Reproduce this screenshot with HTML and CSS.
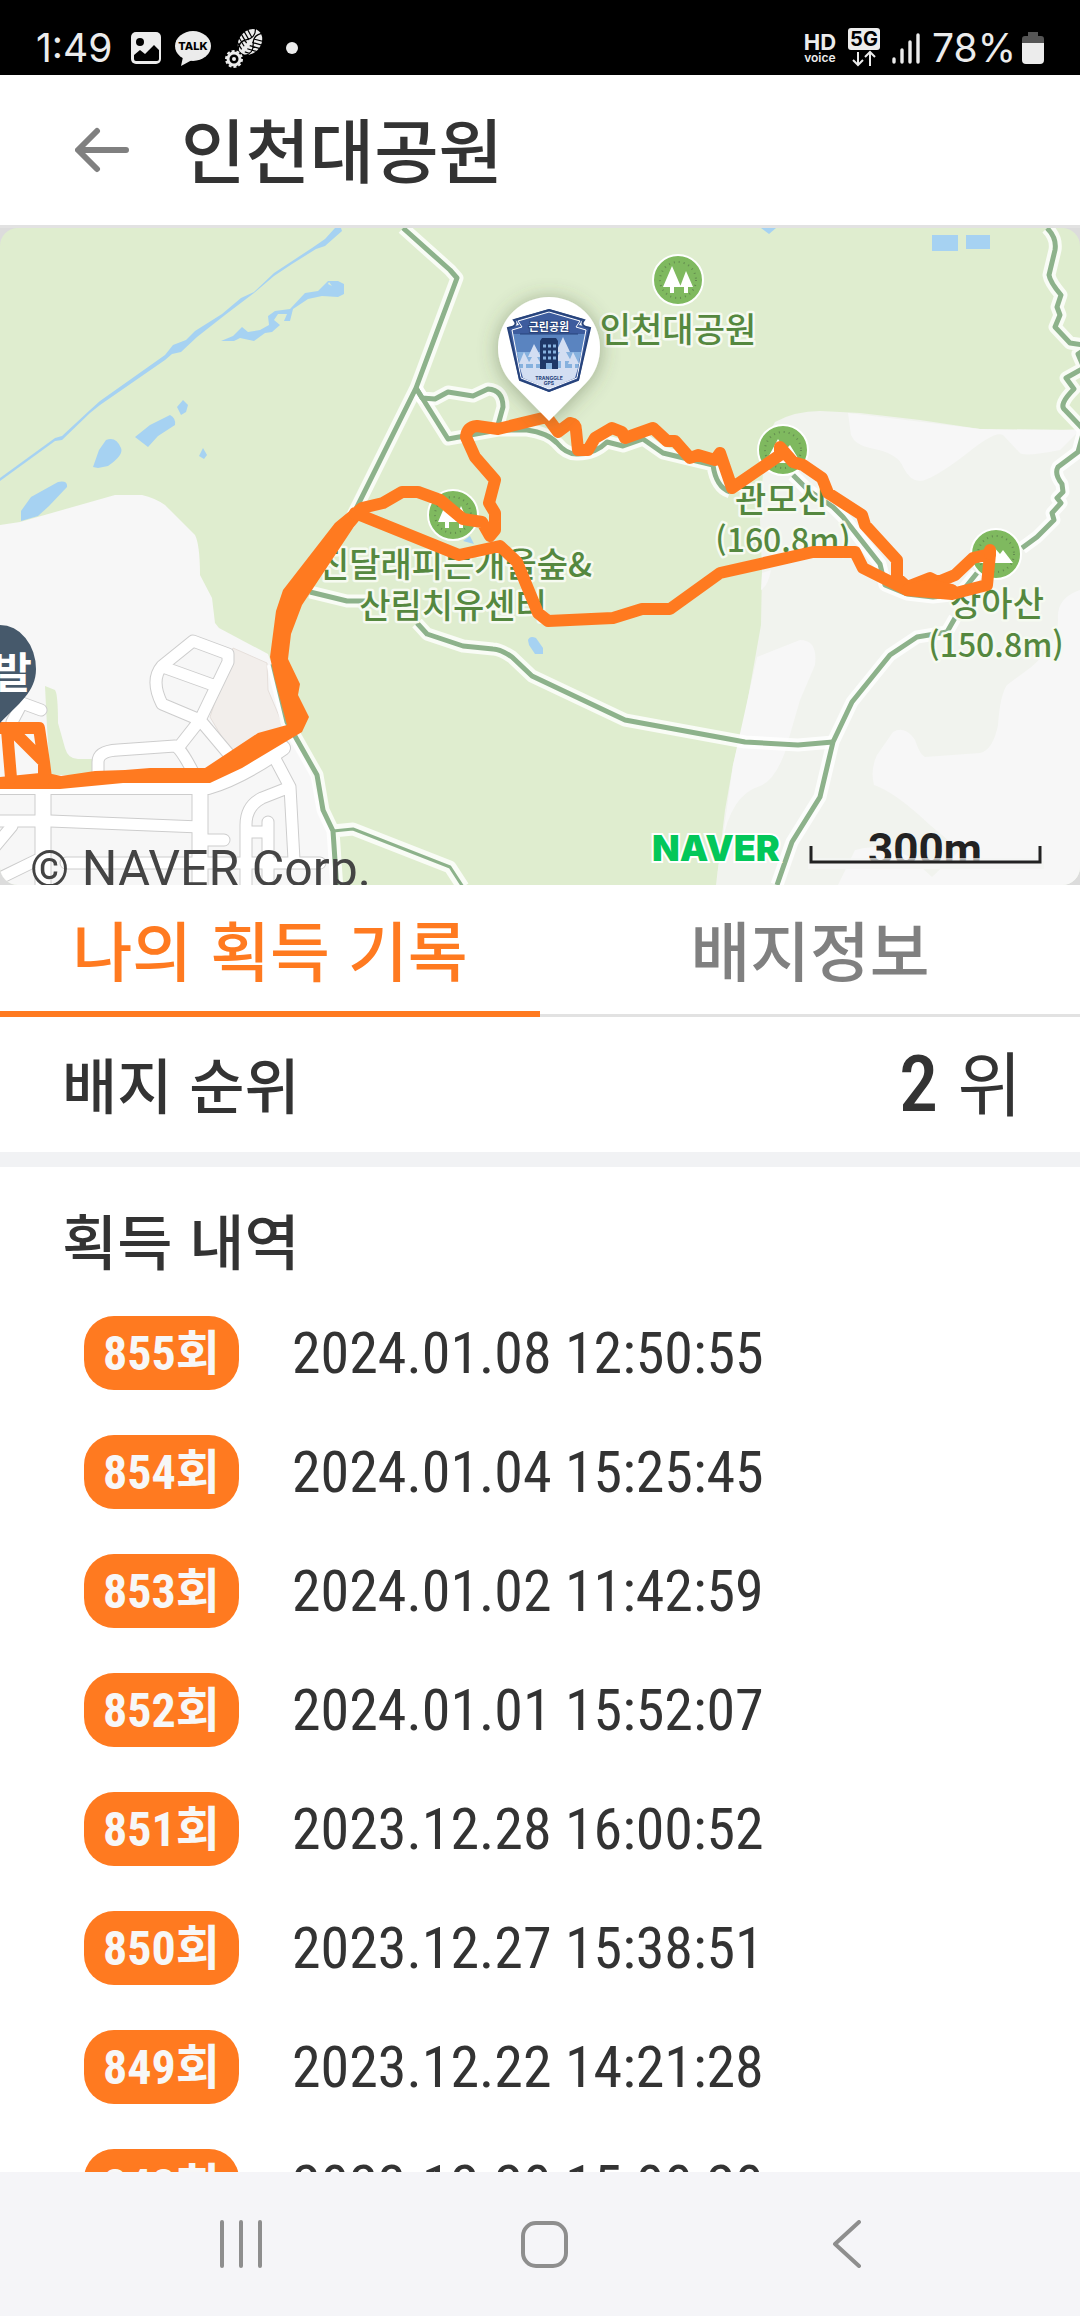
FILE: index.html
```html
<!DOCTYPE html>
<html lang="ko">

<head>
    <meta charset="UTF-8">
    <meta name="viewport" content="width=device-width, initial-scale=1.0">
    <title>인천대공원</title>
    <link rel="stylesheet" href="styles.css">
</head>

<body>

    <div class="app">
        <!-- 상태 표시줄 -->
        <div class="status">
            <div class="status-left">
                <span class="clock">1:49</span>
                <svg width="32" height="34" viewBox="0 0 32 34">
                    <rect x="1" y="1" width="30" height="32" rx="5" fill="#ececec" />
                    <circle cx="10" cy="11" r="4" fill="#000" />
                    <path d="M4 24l6-5 5 4 9-9 5 5v9q0 2-2 2H6q-2 0-2-2z" fill="#000" />
                </svg>
                <svg width="38" height="38" viewBox="0 0 38 38">
                    <ellipse cx="19" cy="17" rx="18" ry="15" fill="#ececec" />
                    <path d="M9 28L7 37l11-6z" fill="#ececec" />
                    <text class="talk" x="19" y="21" text-anchor="middle">TALK</text>
                </svg>
                <svg width="40" height="40" viewBox="0 0 40 40">
                    <g transform="rotate(38 26 14)">
                        <ellipse cx="26" cy="14" rx="11" ry="14" fill="#ececec" />
                        <path d="M15 5l9 4M14 9l10 4M14 13l10 4M14 17l10 4M16 22l8 3M37 5l-9 4M38 9l-10 4M38 13l-10 4M38 17l-10 4M36 22l-8 3M22 0q6 7 0 14t0 14M30 0q-6 7 0 14t0 14" stroke="#000" stroke-width="1.2" fill="none" />
                    </g>
                    <circle cx="10" cy="31" r="6" fill="none" stroke="#ececec" stroke-width="3" />
                    <circle cx="10" cy="31" r="8" fill="none" stroke="#ececec" stroke-width="2" stroke-dasharray="3 2" />
                    <circle cx="10" cy="31" r="2" fill="#ececec" />
                </svg>
                <i class="dot"></i>
            </div>
            <div class="status-right">
                <span class="hd"><b>HD</b><small>voice</small></span>
                <svg width="32" height="40" viewBox="0 0 32 40">
                    <rect width="32" height="22" rx="3" fill="#ececec" />
                    <text class="net" x="16" y="18" text-anchor="middle">5G</text>
                    <path d="M10 24v12M5 32l5 5 5-5M22 38V25M17 29l5-5 5 5" fill="none" stroke="#ececec" stroke-width="2" />
                </svg>
                <svg width="28" height="32" viewBox="0 0 28 32">
                    <path d="M2 27v3M10 18v12M18 10v20M26 3v27" stroke="#ececec" stroke-width="3.4" stroke-linecap="round" />
                </svg>
                <span class="percent">78%</span>
                <svg width="22" height="32" viewBox="0 0 22 32">
                    <path d="M6 0h10v4h3q3 0 3 3v5H0V7q0-3 3-3h3z" fill="#555" />
                    <path d="M0 11h22v17q0 4-4 4H4q-4 0-4-4z" fill="#ececec" />
                </svg>
            </div>
        </div>

        <header class="header">
            <a class="back" href="#" aria-label="뒤로">
                <svg width="54" height="46" viewBox="0 0 54 46">
                    <path d="M51 23H4M22 4L3 23l19 19" fill="none" stroke="#808080" stroke-width="6" stroke-linecap="round" stroke-linejoin="round" />
                </svg>
            </a>
            <h1>인천대공원</h1>
        </header>

        <!-- 지도 -->
        <div class="map">
            <svg class="map-svg" viewBox="0 228 1080 657">
                <defs>
                    <filter id="shadow" x="-50%" y="-50%" width="200%" height="200%">
                        <feDropShadow dx="0" dy="2" stdDeviation="10" flood-color="#4a5a3a" flood-opacity="0.45" />
                    </filter>
                </defs>
                <rect y="228" width="1080" height="657" fill="#dfedcf" />

                <!-- 평지 -->
                <path fill="#f7f7f7" d="M0 525L20 522 115 495H142Q155 498 165 505L195 535Q200 545 200 575L212 598 215 623 219 628 268 654 276 675 288 720 310 770 320 805 335 835V885H0z" />
                <path fill="#dfedcf" d="M45 686L55 690Q58 694 58 723L65 748Q68 759 78 759H93V775H50L47 727z" />
                <path fill="#f2eeeb" stroke="#e6dfdb" stroke-width="1" d="M233 648L267 663 268 690 285 730 232 754 210 717z" />
                <path fill="#f1f3ee" d="M775 422Q795 411 820 411L860 413 920 420 980 429 1030 432 1080 429V885H716L725 810 733 765 745 715 761 625 762 570 760 520 765 440z" />
                <path fill="#f7f7f7" d="M848 413L851 435Q855 445 870 448 898 453 903 467 910 481 920 481 932 480 965 455 995 430 1003 435L1020 453Q1025 457 1060 450L1080 430 980 429z" />
                <path fill="#f7f7f7" d="M757 657L800 640Q818 640 815 665L800 700 785 752Q775 780 760 786 730 795 722 845L716 885 733 765z" />
                <path fill="#f7f7f7" d="M762 573L771 570Q768 586 761 590z" />
                <path fill="#f7f7f7" d="M1080 590Q1056 598 1058 620 1058 645 1030 668L1007 685Q1000 695 998 725 993 750 980 753L925 757Q920 755 915 740 905 725 893 732L877 755Q870 770 874 785 895 792 930 825L960 850 932 877 910 857Q880 842 855 850L838 885H1080z" />

                <!-- 물 -->
                <g fill="#a6d2f2">
                    <path d="M0 478L55 438 62 436 90 410 100 401 165 355 173 345 186 340 195 331 222 314 241 298 254 292 274 273 312 248 325 239 335 228H341L342 231 325 246 316 249 292 264 274 276 254 293 225 315 197 337 181 352 172 354 165 360 100 405 90 413 62 440 55 441 0 481z" />
                    <path fill-rule="evenodd" d="M221 341L233 336 242 327 248 332 260 330 269 325 268 316 275 311 290 309 305 293 318 291 328 281 338 281 344 284V294L338 297 322 296 308 299 293 309 290 321 284 321 287 314 278 314 274 320 280 325 272 332 265 333 254 341 240 338 234 341zM329 282l3 4-4-2z" />
                    <path d="M21 521V511L31 497 58 482Q68 480 67 487L49 506 38 516z" />
                    <path d="M93 467L99 450 106 440Q116 436 121 448 124 455 108 466L98 468z" />
                    <path d="M135 437L150 425 170 415Q176 418 175 425L158 436 148 447z" />
                    <path d="M177 407L183 400 188 405 186 412 181 415z" />
                    <path d="M203 448L207 455 204 459 199 456z" />
                    <path d="M761 228H776L769 234z" />
                    <path d="M932 235h26v16h-26zM966 235h24v14h-24z" />
                    <path d="M528 640Q530 635 536 638L543 648V654H535L529 645z" />
                    <path d="M463 541L470 536 474 544z" />
                </g>

                <!-- 도로 -->
                <g fill="none" stroke="#cdcdcd" stroke-width="13" stroke-linejoin="round" stroke-linecap="round">
                    <path d="M-8 787H208Q240 778 283 748" stroke-width="16" />
                    <path d="M43 787V895M200 787V895" stroke-width="17" />
                    <path d="M-8 821H50L200 827M66 863H320M200 840H224" />
                    <path d="M98 772V762Q98 751 118 750L175 746Q180 747 193 772" />
                    <path d="M193 641L228 654V662L200 720 162 704Q150 680 162 666zM163 667L213 685M200 720L178 748M200 720L232 758" />
                    <path d="M272 753L290 787 294 860M290 787L262 798Q246 806 246 825V890M246 832H268M268 822V890" />
                    <path d="M-8 882L37 860M-8 850L12 826M12 722L22 703 41 710" />
                </g>
                <g fill="none" stroke="#fff" stroke-width="11" stroke-linejoin="round" stroke-linecap="round">
                    <path d="M-8 787H208Q240 778 283 748" stroke-width="14" />
                    <path d="M43 787V895M200 787V895" stroke-width="15" />
                    <path d="M-8 821H50L200 827M66 863H320M200 840H224" />
                    <path d="M98 772V762Q98 751 118 750L175 746Q180 747 193 772" />
                    <path d="M193 641L228 654V662L200 720 162 704Q150 680 162 666zM163 667L213 685M200 720L178 748M200 720L232 758" />
                    <path d="M272 753L290 787 294 860M290 787L262 798Q246 806 246 825V890M246 832H268M268 822V890" />
                    <path d="M-8 882L37 860M-8 850L12 826M12 722L22 703 41 710" />
                </g>

                <!-- 등산로: 흰 테두리 위에 초록 선 -->
                <g fill="none" stroke-linejoin="round">
                    <g stroke="#fff" stroke-opacity="0.8" stroke-width="13">
                        <path d="M403 228L450 270 457 278 416 388 348 525" />
                        <path d="M416 388L422 398 435 399 448 392 473 396 488 389Q503 390 503 407L498 425" />
                        <path d="M416 388L448 439 498 430 527 430Q548 433 557 443 567 455 578 454 595 454 607 442L623 446 643 439 663 453 713 465Q716 487 730 492" />
                        <path d="M1047 228Q1057 238 1055 250L1049 275Q1050 282 1061 295L1057 307 1060 315 1055 327 1070 343 1084 345M1084 350L1078 354 1084 368 1066 378 1074 389Q1058 405 1065 410L1084 430 1078 452 1058 467Q1054 474 1062 484L1063 492 1057 498 1061 503 1052 513 1054 520 1037 537 1022 548" />
                        <path d="M793 475L808 490 833 507 843 517 880 564 885 585 907 594 933 597 960 594 977 573" />
                        <path d="M777 885L792 842 820 797 833 742 852 702 890 655 917 637 947 632 955 618" />
                        <path d="M833 742L798 745 745 742 625 720 532 676 512 657Q500 649 493 649L463 646 427 634 417 623" />
                        <path d="M310 592L347 601H366" />
                        <path d="M273 664L287 722 317 775 323 810 333 831 337 890M333 831L353 829 450 867 463 887" />
                    </g>
                    <g stroke="#8db28b" stroke-width="5">
                        <path d="M403 228L450 270 457 278 416 388 348 525" />
                        <path d="M416 388L422 398 435 399 448 392 473 396 488 389Q503 390 503 407L498 425" />
                        <path d="M416 388L448 439 498 430 527 430Q548 433 557 443 567 455 578 454 595 454 607 442L623 446 643 439 663 453 713 465Q716 487 730 492" />
                        <path d="M1047 228Q1057 238 1055 250L1049 275Q1050 282 1061 295L1057 307 1060 315 1055 327 1070 343 1084 345M1084 350L1078 354 1084 368 1066 378 1074 389Q1058 405 1065 410L1084 430 1078 452 1058 467Q1054 474 1062 484L1063 492 1057 498 1061 503 1052 513 1054 520 1037 537 1022 548" />
                        <path d="M793 475L808 490 833 507 843 517 880 564 885 585 907 594 933 597 960 594 977 573" />
                        <path d="M777 885L792 842 820 797 833 742 852 702 890 655 917 637 947 632 955 618" />
                        <path d="M833 742L798 745 745 742 625 720 532 676 512 657Q500 649 493 649L463 646 427 634 417 623" />
                        <path d="M310 592L347 601H366" />
                        <path d="M273 664L287 722 317 775 323 810 333 831 337 890" />
                        <path d="M333 831L353 829 450 867 463 887" stroke-width="3" />
                    </g>
                </g>

                <!-- 공원, 산 표시 -->
                <g fill="#7fb95f" stroke="#fff" stroke-width="2">
                    <circle cx="678" cy="280" r="25" />
                    <circle cx="453" cy="515" r="25" />
                    <circle cx="783" cy="450" r="25" />
                    <circle cx="996" cy="554" r="25" />
                </g>
                <g fill="none" stroke="#648c50" stroke-width="2" stroke-dasharray="1 4">
                    <circle cx="678" cy="280" r="18" />
                    <circle cx="453" cy="515" r="18" />
                    <circle cx="783" cy="450" r="18" />
                    <circle cx="996" cy="554" r="18" />
                </g>
                <g fill="#fff">
                    <path d="M672 266L681 287H674V293H670V287H663zM686 271L693 287H688V293H684V287H680z" />
                    <path d="M447 501L456 522H449V528H445V522H438zM461 506L468 522H463V528H459V522H455z" />
                    <path d="M765 463L778 439 785 450 790 445 801 463z" />
                    <path d="M979 563L992 545 1000 554 1003 550 1013 563z" />
                </g>
                <g class="place" text-anchor="middle">
                    <text x="678" y="342">인천대공원</text>
                    <text x="455" y="577">진달래피는개울숲&amp;</text>
                    <text x="453" y="618">산림치유센터</text>
                    <text x="782" y="512">관모산</text>
                    <text class="altitude" x="783" y="552">(160.8m)</text>
                    <text x="997" y="616">상아산</text>
                    <text class="altitude" x="996" y="657">(150.8m)</text>
                </g>

                <!-- 이동 경로 -->
                <path fill="#ff7a20" d="M0 777L40 773 52 774 61 776 95 771 125 770 150 768H205L258 733 287 725 275 680 270 657 276 611 283 590 335 523 352 509 366 512 353 528 302 605 291 634 288 659 300 684 298 695 309 717 302 732 242 768 210 783H123L60 789H0z" />
                <g fill="none" stroke="#ff7a20" stroke-width="12" stroke-linejoin="round" stroke-linecap="round">
                    <path d="M0 728H39L44 762 46 778M7 730L11 778M14 732L44 762M44 762V780" />
                    <path d="M355 514L362 508 383 503 402 492H418L440 500 463 519 482 522 490 536 495 530V513L489 503 495 480 475 457 466 437Q467 427 477 426L498 429 547 417 558 432 570 423Q576 424 576 430L578 450H588L595 438 612 428 622 432 625 438 653 428 667 441H675L690 458 698 455 715 460 720 453 732 488 780 455V447L793 462 803 465 822 478 828 493 862 515 865 525 897 560V578L907 587 930 578 938 582 955 575 973 558 990 554 987 585 952 594 907 590 863 568 855 552H813L720 573 670 609H642L613 618 548 621 538 613 517 562 500 546 459 555 355 513" />
                    <path d="M907 590L930 585 952 590M990 554V550" />
                </g>

                <!-- 출발 지점 -->
                <path fill="#46596b" d="M-36 669A36 44 0 0 1 36 669C36 692 18 704 0 723z" />
                <text class="start" x="32" y="688" text-anchor="end">발</text>

                <!-- 배지 핀 -->
                <path fill="#fff" filter="url(#shadow)" d="M549 421L512 383A51 51 0 1 1 586 383z" />
                <path fill="#3d5c9e" d="M549 309L583 319 579 325 590 327 579 380 549 392 519 380 508 327 519 325 515 319z" />
                <path fill="#5a84c0" d="M513 334H585L581 356H517z" />
                <path fill="#86b1de" d="M517 352H581L578 368H520z" />
                <path fill="#d3def2" d="M520 368H578L575 378 549 389 523 378z" />
                <path fill="none" stroke="#fff" stroke-width="1" d="M549 312L580 321 576 327 586 330 577 378 549 389 521 378 512 330 522 327 518 321z" />
                <path fill="none" stroke="#27437b" stroke-width="2" d="M549 310L584 320Q579 326 590 328L578 380 549 391 520 380 508 328Q519 326 514 320z" />
                <path fill="#d3def2" d="M534 344l-6 13h4l-4 7h5v6h3v-6h5l-4-7h4zM563 337l-7 15h4l-5 9h6v9h4v-9h6l-5-9h4zM524 352l-5 12h4v5h3v-5h4zM573 352l-5 12h4v5h3v-5h4z" />
                <path fill="#1f3767" d="M540 341l2-3h14l2 3v28H540z" />
                <path stroke="#86b1de" stroke-width="3" stroke-dasharray="3 2" d="M543 346h13M543 352h13M543 358h13" />
                <path fill="#86b1de" d="M546 363h6v6h-6z" />
                <path stroke="#27437b" d="M520 334H578" />
                <g text-anchor="middle">
                    <text class="badge-name" x="549" y="331">근린공원</text>
                    <text class="badge-brand" x="549" y="380">TRANGGLE</text>
                    <text class="badge-brand" x="549" y="385">GPS</text>
                </g>

                <!-- 저작권, 축척 -->
                <text class="copyright" x="30" y="886">© NAVER Corp.</text>
                <text class="naver" x="652" y="861">NAVER</text>
                <text class="scale" x="925" y="865" text-anchor="middle">300m</text>
                <path fill="#f4f5f3" d="M808 861h236v8H808z" />
                <path fill="#f4f5f3" fill-opacity="0.7" d="M813 858h225v3H813z" />
                <path fill="none" stroke="#222" stroke-width="3" d="M811 846V862H1040V846" />
            </svg>
        </div>

        <nav class="tabs">
            <button class="tab active" type="button">나의 획득 기록</button>
            <button class="tab" type="button">배지정보</button>
        </nav>

        <!-- 획득 기록 -->
        <main class="content">
            <section class="rank">
                <h2>배지 순위</h2>
                <p><b>2</b> 위</p>
            </section>
            <section class="history">
                <h2>획득 내역</h2>
                <ul>
                    <li><span class="count">855회</span><time>2024.01.08 12:50:55</time></li>
                    <li><span class="count">854회</span><time>2024.01.04 15:25:45</time></li>
                    <li><span class="count">853회</span><time>2024.01.02 11:42:59</time></li>
                    <li><span class="count">852회</span><time>2024.01.01 15:52:07</time></li>
                    <li><span class="count">851회</span><time>2023.12.28 16:00:52</time></li>
                    <li><span class="count">850회</span><time>2023.12.27 15:38:51</time></li>
                    <li><span class="count">849회</span><time>2023.12.22 14:21:28</time></li>
                    <li><span class="count">848회</span><time>2023.12.20 15:00:20</time></li>
                </ul>
            </section>
        </main>

        <!-- 하단 버튼 -->
        <div class="navbar">
            <button type="button" aria-label="최근 앱">
                <svg width="48" height="48" viewBox="0 0 48 48">
                    <path d="M5 2v44M24 2v44M43 2v44" stroke="#8e8e8e" stroke-width="4" stroke-linecap="round" />
                </svg>
            </button>
            <button type="button" aria-label="홈">
                <svg width="48" height="48" viewBox="0 0 48 48">
                    <rect x="3" y="3" width="43" height="43" rx="13" fill="none" stroke="#8e8e8e" stroke-width="4" />
                </svg>
            </button>
            <button type="button" aria-label="뒤로">
                <svg width="48" height="48" viewBox="0 0 48 48">
                    <path d="M36 2L12 24 36 46" fill="none" stroke="#8e8e8e" stroke-width="4" stroke-linecap="round" stroke-linejoin="round" />
                </svg>
            </button>
        </div>
    </div>

</body>

</html>
```
FILE: styles.css
```css
* {
    padding: 0;
    margin: 0;
    box-sizing: border-box;
}

body {
    font-family: "Noto Sans CJK KR", sans-serif;
    color: #333;
    background-color: #fff;
}

ul {
    list-style: none;
}

svg {
    display: block;
}

button {
    border: 0;
    background: none;
    font-family: inherit;
}

.app {
    height: 100vh;
    display: flex;
    flex-direction: column;
    overflow: hidden;
}

.app>div,
.header,
.tabs {
    flex-shrink: 0;
}

/* 상태 표시줄 */
.status {
    height: 75px;
    padding: 20px 36px 0 36px;
    display: flex;
    justify-content: space-between;
    background-color: #000;
    color: #ececec;
    font-family: Inter, sans-serif;
}

.status-left,
.status-right {
    height: 56px;
    display: flex;
    align-items: center;
    gap: 12px;
}

.clock,
.percent {
    font-size: 39px;
    line-height: 56px;
}

.clock {
    margin-right: 6px;
}

.percent {
    margin-right: -6px;
}

.dot {
    width: 12px;
    height: 12px;
    margin-left: 10px;
    border-radius: 50%;
    background-color: #ececec;
}

.hd {
    display: flex;
    flex-direction: column;
    align-items: center;
}

.hd b {
    font-size: 22px;
    line-height: 20px;
}

.hd small {
    font-size: 12px;
    font-weight: 600;
    line-height: 12px;
}

.talk {
    font-size: 11px;
    font-weight: 800;
}

.net {
    font-size: 20px;
    font-weight: 700;
}

/* 제목 */
.header {
    height: 153px;
    padding: 0 75px;
    display: flex;
    align-items: center;
    gap: 52px;
    border-bottom: 3px solid #e2e2e2;
}

.header h1 {
    padding-bottom: 4px;
    font-size: 70px;
    font-weight: 500;
    line-height: 80px;
}

/* 지도 */
.map {
    background-color: #dcdcdc;
}

.map-svg {
    width: 100%;
    height: auto;
    border-radius: 18px;
}

.place {
    font-family: "Noto Sans CJK KR", sans-serif;
    font-size: 34px;
    font-weight: 500;
    fill: #55883f;
    stroke: #f6faf1;
    stroke-width: 5px;
    stroke-linejoin: round;
    paint-order: stroke;
}

.place .altitude {
    font-size: 32px;
}

.start {
    font-family: "Noto Sans CJK KR", sans-serif;
    font-size: 42px;
    font-weight: 700;
    fill: #fff;
}

.badge-name {
    font-family: "Noto Sans CJK KR", sans-serif;
    font-size: 11px;
    font-weight: 700;
    fill: #fff;
    stroke: #27437b;
    stroke-width: 2px;
    paint-order: stroke;
}

.badge-brand {
    font-family: Inter, sans-serif;
    font-size: 5px;
    font-weight: 700;
    fill: #27437b;
}

.copyright {
    font-family: Roboto, sans-serif;
    font-size: 50px;
    fill: #444;
}

.naver {
    font-family: Inter, sans-serif;
    font-size: 36px;
    font-weight: 900;
    fill: #03c75a;
    stroke: #fff;
    stroke-width: 4px;
    paint-order: stroke;
}

.scale {
    font-family: Roboto, sans-serif;
    font-size: 44px;
    font-weight: 700;
    fill: #222;
}

/* 탭 */
.tabs {
    display: flex;
}

.tab {
    flex: 1;
    height: 132px;
    padding-bottom: 4px;
    border-bottom: 3px solid #e2e2e2;
    font-size: 65px;
    font-weight: 500;
    color: #808080;
}

.tab.active {
    padding-bottom: 1px;
    border-bottom: 6px solid #ff7a20;
    color: #ff7a20;
}

/* 내용 */
.content {
    flex: 1;
    min-height: 0;
    overflow: hidden;
}

.content h2 {
    font-size: 60px;
    font-weight: 500;
    line-height: 80px;
}

.rank {
    height: 150px;
    padding: 0 58px 4px 62px;
    display: flex;
    justify-content: space-between;
    align-items: center;
    border-bottom: 15px solid #f1f2f4;
}

.rank p {
    font-size: 70px;
    font-weight: 400;
    line-height: 80px;
}

.rank b {
    font-family: "Roboto Condensed", Roboto, sans-serif;
    font-size: 78px;
    font-weight: 500;
}

.history {
    padding: 32px 62px 0;
}

.history ul {
    padding: 37px 22px 0;
}

.history li {
    height: 74px;
    margin-bottom: 45px;
    display: flex;
    align-items: center;
    gap: 53px;
}

.count {
    height: 74px;
    padding: 0 19px;
    border-radius: 30px;
    background-color: #ff7a20;
    color: #f7f7f7;
    font-family: "Roboto Condensed", Roboto, "Noto Sans CJK KR", sans-serif;
    font-size: 48px;
    font-weight: 700;
    line-height: 76px;
}

.history time {
    font-family: "Roboto Condensed", Roboto, sans-serif;
    font-size: 58px;
    line-height: 74px;
    white-space: nowrap;
}

/* 하단 버튼 */
.navbar {
    height: 144px;
    padding: 0 82px 0 90px;
    display: flex;
    background-color: #f5f5f8;
}

.navbar button {
    flex: 1;
    display: flex;
    justify-content: center;
    align-items: center;
}
```
